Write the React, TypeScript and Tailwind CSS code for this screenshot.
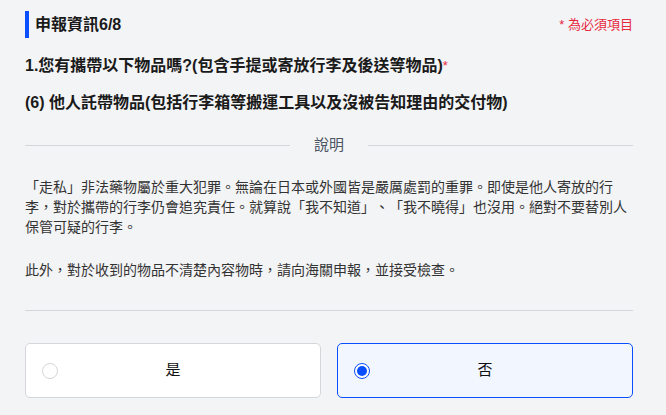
import { useState } from 'react'

const font = { fontFamily: '"Liberation Sans", "Noto Sans CJK TC", sans-serif' }

export default function App() {
  const [answer, setAnswer] = useState<'yes' | 'no'>('no')

  const options: { key: 'yes' | 'no'; label: string }[] = [
    { key: 'yes', label: '是' },
    { key: 'no', label: '否' },
  ]

  return (
    <div
      className="min-h-screen bg-[#f3f4f6] pl-[25px] pr-[33px] pt-[11px] text-[#1a1a1a] [text-spacing-trim:space-all]"
      style={font}
    >
      {/* Header */}
      <div className="flex items-center justify-between">
        <h1 className="flex h-[27px] items-center border-l-[4px] border-[#0a4fff] pl-[6px] text-[16px] font-bold">
          申報資訊6/8
        </h1>
        <span className="text-[13px] text-[#e8283f]">* 為必須項目</span>
      </div>

      {/* Question */}
      <p className="mt-[16px] text-[16px] font-bold leading-[24px]">
        1.您有攜帶以下物品嗎?(包含手提或寄放行李及後送等物品)
        <span className="align-top text-[13px] font-normal text-[#e8283f]">*</span>
      </p>
      <p className="mt-[13px] text-[16px] font-bold leading-[24px]">
        (6) 他人託帶物品(包括行李箱等搬運工具以及沒被告知理由的交付物)
      </p>

      {/* Divider with label */}
      <div className="mt-[20px] flex items-center gap-[24px]">
        <div className="h-px flex-1 bg-[#d4d6da]" />
        <span className="text-[15px] leading-[20px] text-[#4b5563]">說明</span>
        <div className="h-px flex-1 bg-[#d4d6da]" />
      </div>

      <p className="mt-[22px] text-[14px] leading-[20px] text-[#333]">
        「走私」非法藥物屬於重大犯罪。無論在日本或外國皆是嚴厲處罰的重罪。即使是他人寄放的行李，對於攜帶的行李仍會追究責任。就算說「我不知道」、「我不曉得」也沒用。絕對不要替別人保管可疑的行李。
      </p>
      <p className="mt-[23px] text-[14px] leading-[20px] text-[#333]">
        此外，對於收到的物品不清楚內容物時，請向海關申報，並接受檢查。
      </p>

      <div className="mt-[30px] h-px bg-[#d4d6da]" />

      {/* Options */}
      <div className="mt-[32px] grid grid-cols-2 gap-[16px]">
        {options.map((o) => {
          const selected = answer === o.key
          return (
            <button
              key={o.key}
              onClick={() => setAnswer(o.key)}
              className={`flex h-[55px] items-center rounded-[5px] border px-[16px] ${
                selected ? 'border-[#0a4fff] bg-[#f2f6ff]' : 'border-[#d4d6da] bg-white'
              }`}
            >
              {selected ? (
                <span className="flex h-4 w-4 items-center justify-center rounded-full border-[1.5px] border-[#0a4fff] bg-white">
                  <span className="h-[10px] w-[10px] rounded-full bg-[#0a4fff]" />
                </span>
              ) : (
                <span className="h-4 w-4 rounded-full border border-[#d4d6da] bg-white" />
              )}
              <span className="flex-1 text-center text-[15px] text-[#111]">{o.label}</span>
              <span className="w-4" />
            </button>
          )
        })}
      </div>
    </div>
  )
}
